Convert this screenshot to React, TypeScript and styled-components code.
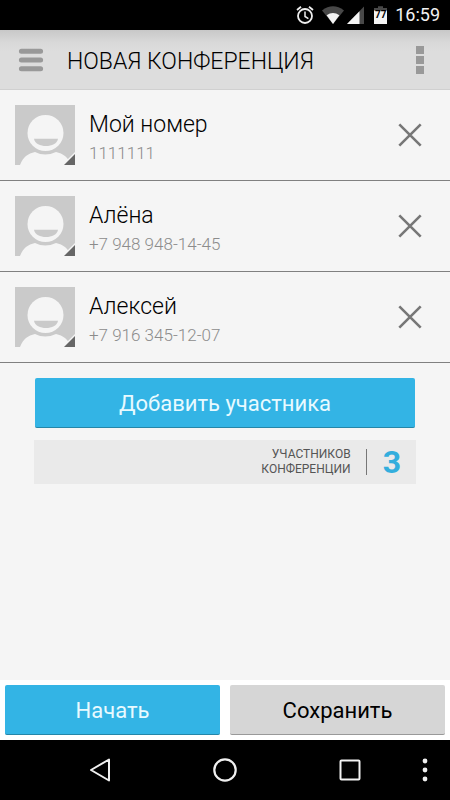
import React, { useState } from "react";
import styled, { createGlobalStyle } from "styled-components";

const GlobalStyle = createGlobalStyle`
  * { box-sizing: border-box; }
  body {
    margin: 0;
    background: #f5f5f5;
    color: #000;
    font-family: Roboto, "Noto Sans", sans-serif;
  }
  button { font: inherit; cursor: pointer; }
`;

const Screen = styled.div`
  display: flex;
  flex-direction: column;
  min-height: 100vh;
`;

const StatusBar = styled.div`
  display: flex;
  align-items: center;
  justify-content: flex-end;
  height: 30px;
  padding-right: 10px;
  background: #000;
  color: #f2f2f2;
  svg { display: block; }
`;

const Clock = styled.time`
  margin-left: 8px;
  font-size: 18px;
  font-weight: 400;
  line-height: 32px;
`;

const Header = styled.header`
  display: flex;
  align-items: center;
  height: 60px;
  padding: 0 18px;
  background: linear-gradient(#c8c8c8, #d8d8d8 12px, #dddddd 22px);
  border-bottom: 1px solid #d0d0d0;
`;

const IconButton = styled.button<{ $width: number }>`
  display: flex;
  align-items: center;
  justify-content: center;
  flex: none;
  width: ${(p) => p.$width}px;
  height: 40px;
  padding: 0;
  border: 0;
  background: none;
  svg { display: block; }
`;

const Title = styled.h1`
  flex: 1;
  margin: 0 0 0 23px;
  padding-top: 4px;
  font-size: 23px;
  font-weight: 300;
  line-height: 28px;
  white-space: nowrap;
`;

const List = styled.ul`
  margin: 0;
  padding: 0;
  list-style: none;
`;

const Row = styled.li`
  display: flex;
  align-items: center;
  padding: 15px 25px 15px 15px;
  border-bottom: 1px solid #808080;
`;

const AvatarButton = styled.button`
  flex: none;
  width: 60px;
  height: 60px;
  padding: 0;
  border: 0;
  background: #cacaca;
  svg { display: block; }
`;

const Person = styled.div`
  flex: 1;
  min-width: 0;
  margin-left: 14px;
  padding-top: 4px;
`;

const Name = styled.div`
  font-size: 23px;
  font-weight: 300;
  line-height: 32px;
`;

const Phone = styled.div`
  font-size: 17px;
  font-weight: 300;
  line-height: 24px;
  color: #8c8c8c;
`;

const Content = styled.main`
  flex: 1;
  padding: 15px 34px;
`;

const ActionButton = styled.button<{ $primary?: boolean }>`
  display: block;
  width: 100%;
  height: 50px;
  padding: 3px 0 0;
  border: 0;
  border-bottom: 1px solid ${(p) => (p.$primary ? "#2586a8" : "#999")};
  border-radius: 2px;
  background: ${(p) => (p.$primary ? "#33b4e5" : "#d6d6d6")};
  color: ${(p) => (p.$primary ? "#e8faff" : "#000")};
  font-size: 22px;
  line-height: 30px;
`;

const AddArea = styled.div`
  padding: 0 1px;
`;

const Summary = styled.div`
  display: flex;
  align-items: center;
  justify-content: flex-end;
  height: 44px;
  margin-top: 12px;
  padding-right: 15px;
  background: #eaeaea;
`;

const SummaryLabel = styled.div`
  color: #555;
  font-size: 12px;
  line-height: 15px;
  text-align: right;
`;

const Count = styled.strong`
  margin-left: 15px;
  padding-left: 16px;
  border-left: 1px solid #777;
  color: #33aedd;
  font-size: 32px;
  font-weight: 700;
  line-height: 26px;
`;

const Footer = styled.footer`
  display: grid;
  grid-template-columns: 1fr 1fr;
  gap: 10px;
  padding: 5px;
  background: #fff;
`;

const NavBar = styled.nav`
  display: grid;
  grid-template-columns: 3fr 10fr 10fr 10fr 3fr;
  align-items: center;
  height: 60px;
  background: #000;
`;

const NavSlot = styled.div<{ $column: number }>`
  display: flex;
  grid-column: ${(p) => p.$column};
  justify-content: ${(p) => (p.$column === 5 ? "flex-start" : "center")};
`;

const AlarmIcon = () => (
  <svg width="18" height="20" viewBox="0 0 18 20" fill="none" stroke="#eee">
    <circle cx="9" cy="11" r="7" strokeWidth="1.8" />
    <path d="M9 6.5V11.5L12.4 13.6" strokeWidth="1.5" />
    <path d="M1 5L5 1.7M13 1.7L17 5" strokeWidth="1.8" />
  </svg>
);

const WifiIcon = () => (
  <svg width="22" height="20" viewBox="0 0 22 20">
    <path d="M0 5.5Q11-2.8 22 5.5L11 19Z" fill="#484848" />
    <path d="M4.6 10.2Q11 5.8 17.4 10.2L11 19Z" fill="#f4f4f4" />
  </svg>
);

const SignalIcon = () => (
  <svg width="17" height="20" viewBox="0 0 17 20">
    <path d="M17 1.5V19H0Z" fill="#484848" />
    <path d="M12.5 6.2V19H0Z" fill="#f4f4f4" />
  </svg>
);

const Battery = styled.div`
  position: relative;
  margin-left: 10px;
`;

const BatteryText = styled.span`
  position: absolute;
  inset: 5px 0 0;
  color: #000;
  font-size: 10px;
  font-weight: 700;
  line-height: 10px;
  text-align: center;
`;

const IconGroup = styled.div`
  display: flex;
  align-items: center;
  gap: 3px;
  margin-left: 8px;
`;

const BatteryIcon = () => (
  <Battery>
    <svg width="13" height="20" viewBox="0 0 13 20">
      <path d="M4 1.3H9V3H13V6H0V3H4Z" fill="#484848" />
      <path d="M0 5.5H13V19H0Z" fill="#f4f4f4" />
    </svg>
    <BatteryText>77</BatteryText>
  </Battery>
);

const MenuIcon = () => (
  <svg width="26" height="24" viewBox="0 0 26 24" stroke="#999" strokeWidth="5" strokeLinecap="round">
    <path d="M3.4 3.3H22.6M3.4 12H22.6M3.4 20.7H22.6" />
  </svg>
);

const MoreIcon = () => (
  <svg width="8" height="28" viewBox="0 0 8 28" fill="#999">
    <path d="M0 0H8V8H0ZM0 10H8V18H0ZM0 20H8V28H0Z" />
  </svg>
);

const CloseIcon = () => (
  <svg width="24" height="24" viewBox="0 0 24 24" stroke="#777" strokeWidth="2.6">
    <path d="M1.3 1.3L22.7 22.7M22.7 1.3L1.3 22.7" />
  </svg>
);

const AvatarIcon = () => (
  <svg width="60" height="60" viewBox="0 0 60 60">
    <path d="M5 60C8 52 13 48.5 20 47Q30 52 41 47C48 48.5 53 52 56 60Z" fill="#f5f5f5" />
    <circle cx="30.5" cy="28" r="18" fill="#f5f5f5" />
    <path d="M19 33.7H43C41.5 43.4 20.5 43.4 19 33.7Z" fill="#cacaca" />
    <path d="M60 47V60H47Z" fill="#f5f5f5" />
    <path d="M60 49V60H49Z" fill="#666" />
  </svg>
);

const BackIcon = () => (
  <svg width="22" height="24" viewBox="0 0 22 24" fill="none" stroke="#f0f0f0" strokeWidth="2" strokeLinejoin="round">
    <path d="M2 12L20 1.5V22.5Z" />
  </svg>
);

const HomeIcon = () => (
  <svg width="24" height="24" viewBox="0 0 24 24" fill="none" stroke="#f0f0f0" strokeWidth="2.2">
    <circle cx="12" cy="12" r="10.7" />
  </svg>
);

const RecentIcon = () => (
  <svg width="22" height="22" viewBox="0 0 22 22" fill="none" stroke="#f0f0f0" strokeWidth="2">
    <rect x="1.5" y="1.5" width="19" height="19" rx="1" />
  </svg>
);

const DotsIcon = () => (
  <svg width="6" height="24" viewBox="0 0 6 24" fill="#f0f0f0">
    <circle cx="3" cy="3" r="2.4" />
    <circle cx="3" cy="12" r="2.4" />
    <circle cx="3" cy="21" r="2.4" />
  </svg>
);

const contacts = [
  { name: "Мой номер", phone: "1111111" },
  { name: "Алёна", phone: "+7 948 948-14-45" },
  { name: "Алексей", phone: "+7 916 345-12-07" },
];

export default function App() {
  const [people, setPeople] = useState(contacts);

  return (
    <>
      <GlobalStyle />
      <Screen>
        <StatusBar>
          <AlarmIcon />
          <IconGroup>
            <WifiIcon />
            <SignalIcon />
          </IconGroup>
          <BatteryIcon />
          <Clock>16:59</Clock>
        </StatusBar>
        <Header>
          <IconButton $width={26} aria-label="Меню">
            <MenuIcon />
          </IconButton>
          <Title>НОВАЯ КОНФЕРЕНЦИЯ</Title>
          <IconButton $width={24} aria-label="Ещё">
            <MoreIcon />
          </IconButton>
        </Header>
        <List>
          {people.map((person) => (
            <Row key={person.phone}>
              <AvatarButton aria-label={`Фото: ${person.name}`}>
                <AvatarIcon />
              </AvatarButton>
              <Person>
                <Name>{person.name}</Name>
                <Phone>{person.phone}</Phone>
              </Person>
              <IconButton
                $width={30}
                aria-label={`Удалить: ${person.name}`}
                onClick={() => setPeople(people.filter((p) => p !== person))}
              >
                <CloseIcon />
              </IconButton>
            </Row>
          ))}
        </List>
        <Content>
          <AddArea>
            <ActionButton $primary>Добавить участника</ActionButton>
          </AddArea>
          <Summary>
            <SummaryLabel>
              УЧАСТНИКОВ
              <br />
              КОНФЕРЕНЦИИ
            </SummaryLabel>
            <Count>{people.length}</Count>
          </Summary>
        </Content>
        <Footer>
          <ActionButton $primary>Начать</ActionButton>
          <ActionButton>Сохранить</ActionButton>
        </Footer>
        <NavBar>
          <NavSlot $column={2}>
            <IconButton $width={40} aria-label="Назад">
              <BackIcon />
            </IconButton>
          </NavSlot>
          <NavSlot $column={3}>
            <IconButton $width={40} aria-label="Домой">
              <HomeIcon />
            </IconButton>
          </NavSlot>
          <NavSlot $column={4}>
            <IconButton $width={40} aria-label="Недавние">
              <RecentIcon />
            </IconButton>
          </NavSlot>
          <NavSlot $column={5}>
            <IconButton $width={24} aria-label="Параметры">
              <DotsIcon />
            </IconButton>
          </NavSlot>
        </NavBar>
      </Screen>
    </>
  );
}
